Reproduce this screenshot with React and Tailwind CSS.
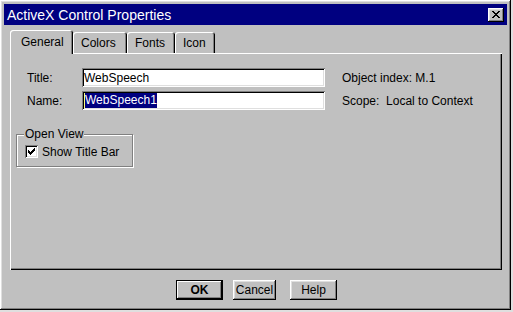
const raised =
  "shadow-[inset_-1px_-1px_0_#000,inset_1px_1px_0_#fff,inset_-2px_-2px_0_#808080,inset_2px_2px_0_#dfdfdf]";
const sunken =
  "shadow-[inset_1px_1px_0_#808080,inset_-1px_-1px_0_#fff,inset_2px_2px_0_#000,inset_-2px_-2px_0_#dfdfdf]";

function CloseGlyph() {
  return (
    <svg width="8" height="7" viewBox="0 0 8 7" shapeRendering="crispEdges">
      <path
        fill="#000"
        d="M0 0h2v1H0zM6 0h2v1H6zM1 1h2v1H1zM5 1h2v1H5zM2 2h4v1H2zM3 3h2v1H3zM2 4h4v1H2zM1 5h2v1H1zM5 5h2v1H5zM0 6h2v1H0zM6 6h2v1H6z"
      />
    </svg>
  );
}

function CheckGlyph() {
  return (
    <svg width="7" height="7" viewBox="0 0 7 7" shapeRendering="crispEdges">
      <path
        fill="#000"
        d="M6 0h1v1H6zM5 1h2v1H5zM0 2h1v1H0zM4 2h3v1H4zM0 3h2v1H0zM3 3h3v1H3zM0 4h5v1H0zM1 5h3v1H1zM2 6h1v1H2z"
      />
    </svg>
  );
}

function Tab({ label, active, width }) {
  if (active) {
    return (
      <div
        className={`relative z-10 -mb-px h-[24px] ${width} flex items-center pl-[11px] bg-[#c0c0c0] rounded-t-[3px] shadow-[inset_1px_1px_0_#fff,inset_-1px_0_0_#000,inset_-2px_0_0_#808080]`}
      >
        {label}
      </div>
    );
  }
  return (
    <div
      className={`h-[21px] ${width} flex items-center pl-[8px] bg-[#c0c0c0] rounded-t-[3px] shadow-[inset_1px_1px_0_#fff,inset_-1px_0_0_#000,inset_-2px_0_0_#808080]`}
    >
      {label}
    </div>
  );
}

function Button({ children, width, primary }) {
  return (
    <button
      className={`h-[20px] ${width} flex items-center justify-center bg-[#c0c0c0] text-[12px] text-black ${
        primary
          ? "font-bold shadow-[inset_1px_1px_0_#000,inset_-1px_-1px_0_#000,inset_-2px_-2px_0_#000,inset_2px_2px_0_#fff,inset_-3px_-3px_0_#808080]"
          : raised
      }`}
    >
      {children}
    </button>
  );
}

export default function App() {
  return (
    <div className="w-[513px] h-[312px] bg-[#dfdfdf] font-['Liberation_Sans',Arial,sans-serif] text-[12px] text-black">
      <div className={`w-[511px] h-[310px] bg-[#c0c0c0] p-[4px] flex flex-col ${raised}`}>
        {/* title bar */}
        <div className="h-[21px] bg-[#000080] flex items-center justify-between pl-[3px] pr-[3px]">
          <span className="text-white text-[14px] leading-none">ActiveX Control Properties</span>
          <div className={`w-[16px] h-[14px] bg-[#c0c0c0] flex items-center justify-center ${raised}`}>
            <CloseGlyph />
          </div>
        </div>

        {/* tabs */}
        <div className="mt-[5px] ml-[6px] h-[23px] flex items-end">
          <Tab label="General" active width="w-[63px]" />
          <Tab label="Colors" width="w-[54px]" />
          <Tab label="Fonts" width="w-[48px]" />
          <Tab label="Icon" width="w-[40px]" />
        </div>

        {/* panel */}
        <div
          className={`ml-[6px] w-[492px] h-[217px] pt-[15px] pl-[6px] shadow-[inset_1px_1px_0_#fff,inset_-1px_-1px_0_#000,inset_-2px_-2px_0_#808080]`}
        >
          <div className="pl-[11px] flex flex-col gap-[4px]">
            <div className="flex items-center h-[19px]">
              <span className="w-[55px]">Title:</span>
              <div className={`w-[243px] h-[19px] bg-white flex items-center pl-[2px] ${sunken}`}>
                WebSpeech
              </div>
              <span className="ml-[17px]">Object index: M.1</span>
            </div>
            <div className="flex items-center h-[19px]">
              <span className="w-[55px]">Name:</span>
              <div className={`w-[243px] h-[19px] bg-white flex items-center pl-[2px] ${sunken}`}>
                <span className="bg-[#000080] text-white leading-[15px] border-l border-[#ffff80]">
                  WebSpeech1
                </span>
              </div>
              <span className="ml-[17px] whitespace-pre">Scope:  Local to Context</span>
            </div>
          </div>

          <fieldset className="mt-[17px] w-[117px] border border-[#808080] pt-[4px] pb-[8px] shadow-[1px_1px_0_#fff,inset_1px_1px_0_#fff]">
            <legend className="ml-[7px] px-[1px] bg-[#c0c0c0] leading-[14px]">Open View</legend>
            <label className="ml-[8px] flex items-center gap-[4px] h-[13px]">
              <span className={`w-[13px] h-[13px] bg-white flex items-center justify-center ${sunken}`}>
                <CheckGlyph />
              </span>
              Show Title Bar
            </label>
          </fieldset>
        </div>

        {/* buttons */}
        <div className="mt-[10px] flex justify-center pl-[2px]">
          <Button width="w-[47px]" primary>
            OK
          </Button>
          <div className="ml-[10px]">
            <Button width="w-[43px]">Cancel</Button>
          </div>
          <div className="ml-[14px]">
            <Button width="w-[47px]">Help</Button>
          </div>
        </div>
      </div>
    </div>
  );
}
